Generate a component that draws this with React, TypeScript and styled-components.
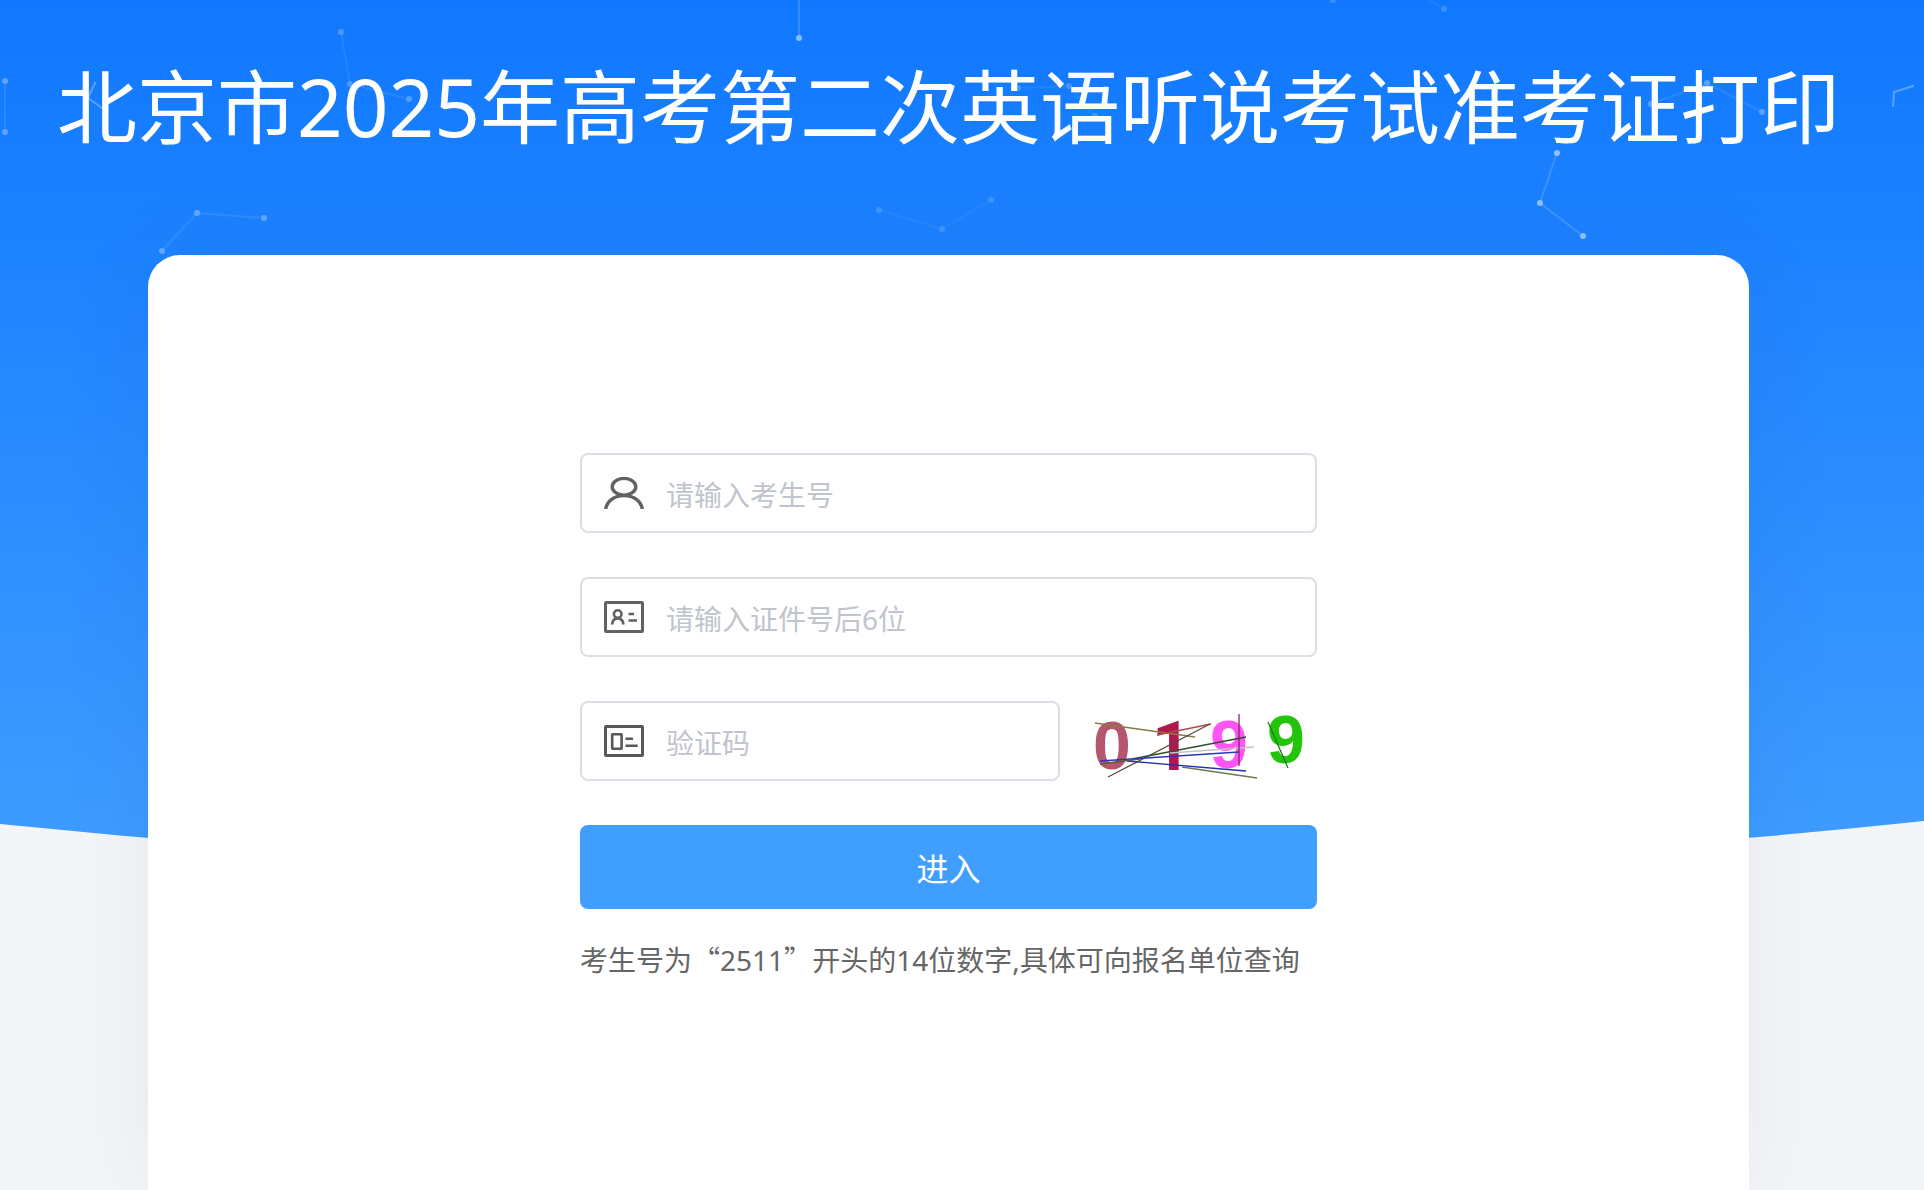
import React from "react";
import styled, { createGlobalStyle } from "styled-components";

const GlobalStyle = createGlobalStyle`
  *, *::before, *::after { box-sizing: border-box; }
  body {
    margin: 0;
    background: #f4f5f7;
    font-family: "Noto Sans", "Noto Sans CJK SC", sans-serif;
  }
`;

const Page = styled.div`
  position: relative;
  display: flex;
  flex-direction: column;
  align-items: center;
  min-height: 100vh;
  padding-right: 27px;
  overflow: hidden;
`;

const Backdrop = styled.svg`
  position: absolute;
  top: 0;
  left: 0;
  width: 100%;
  height: 880px;
`;

const Title = styled.h1`
  position: relative;
  margin: 0;
  padding: 48px 0 91px;
  color: #fff;
  font-size: 80px;
  font-weight: 400;
  line-height: 116px;
  text-align: center;
`;

const Card = styled.main`
  position: relative;
  flex: 1;
  display: flex;
  align-items: flex-start;
  justify-content: center;
  width: calc(100% - 296px);
  padding: 198px 32px;
  border-radius: 32px 32px 0 0;
  background: #fff;
  box-shadow: 0 0 100px rgba(20, 20, 80, 0.06);
`;

const Form = styled.form`
  display: flex;
  flex-direction: column;
  gap: 44px;
  width: 100%;
  max-width: 737px;
`;

const FieldRow = styled.div`
  display: flex;
  gap: 20px;
`;

const Field = styled.label`
  flex: 1;
  display: flex;
  align-items: center;
  gap: 22px;
  min-width: 0;
  height: 80px;
  padding: 0 22px;
  border: 2px solid #dcdfe6;
  border-radius: 8px;
  background: #fff;
`;

const FieldIcon = styled.svg<{ $color?: string }>`
  flex: none;
  width: 40px;
  height: 32px;
  color: ${(p) => p.$color ?? "#606266"};
  fill: none;
  stroke: currentColor;
  stroke-width: 3.4;
`;

const TextInput = styled.input`
  flex: 1;
  min-width: 0;
  height: 100%;
  padding: 4px 0 0;
  border: 0;
  outline: 0;
  background: transparent;
  color: #606266;
  font: inherit;
  font-size: 28px;
  line-height: 48px;
  &::placeholder {
    color: #c0c4cc;
    opacity: 1;
  }
`;

const CaptchaButton = styled.button`
  flex: none;
  display: block;
  width: 237px;
  height: 80px;
  padding: 0;
  border: 0;
  background: #fff;
  cursor: pointer;
`;

const CaptchaImage = styled.svg`
  display: block;
  width: 100%;
  height: 100%;
  overflow: visible;
  font-family: "Liberation Sans", Arial, sans-serif;
  font-size: 68px;
  font-weight: 700;
`;

const Footer = styled.div`
  display: flex;
  flex-direction: column;
  gap: 30px;
`;

const SubmitButton = styled.button`
  height: 84px;
  padding: 4px 0 0;
  border: 0;
  border-radius: 8px;
  background: #409eff;
  color: #fff;
  font: inherit;
  font-size: 32px;
  line-height: 40px;
  cursor: pointer;
`;

const Hint = styled.p`
  margin: 0;
  color: #666;
  font-size: 28px;
  line-height: 40px;
  white-space: nowrap;
`;

const WideQuote = styled.span`
  font-family: "Noto Sans CJK SC", sans-serif;
`;

type Chain = { points: [number, number][]; opacity: number; r?: number };

const chains: Chain[] = [
  { points: [[5, 81], [5, 132]], opacity: 0.3 },
  { points: [[95, 83], [88, 98], [102, 108]], opacity: 0.35, r: 1 },
  { points: [[341, 32], [350, 84], [409, 99]], opacity: 0.25 },
  { points: [[162, 251], [197, 213], [264, 218]], opacity: 0.3 },
  { points: [[799, -10], [799, 38]], opacity: 0.5 },
  { points: [[879, 210], [942, 229], [991, 200]], opacity: 0.16 },
  { points: [[1018, 88], [1069, 86], [1095, 116]], opacity: 0.2 },
  { points: [[1333, 0]], opacity: 0.18 },
  { points: [[1422, -5], [1444, 9]], opacity: 0.18 },
  { points: [[1557, 153], [1540, 203], [1583, 236]], opacity: 0.5 },
  { points: [[1651, 104], [1707, 83], [1762, 112]], opacity: 0.3 },
  { points: [[1893, 106], [1894, 92], [1913, 86]], opacity: 0.35, r: 1 },
];

const scribbles: [string, string][] = [
  ["#8a7a4a", "M15 22L115 36"],
  ["#b0484a", "M77 34L131 23"],
  ["#5a4a3c", "M28 76L130 23"],
  ["#2f4f2f", "M52 58L166 36"],
  ["#2a35b8", "M20 60L159 51"],
  ["#2230a8", "M47 60L166 70"],
  ["#6a7a50", "M102 66L177 77"],
  ["#c4c4c4", "M90 52L174 46"],
  ["#8a1f6a", "M159 13V65"],
  ["#1d7a1d", "M188 21L208 67"],
  ["#5c5a3a", "M20 63L60 58"],
];

export default function App() {
  return (
    <>
      <GlobalStyle />
      <Page>
        <Backdrop viewBox="0 0 1924 880" preserveAspectRatio="none" aria-hidden="true">
          <defs>
            <linearGradient id="sky" x1="0" y1="0" x2="0" y2="1">
              <stop offset="0" stopColor="#1078ff" />
              <stop offset="0.3" stopColor="#1e83ff" />
              <stop offset="1" stopColor="#409dff" />
            </linearGradient>
          </defs>
          <path d="M0 0H1924V821Q962 923 0 824Z" fill="url(#sky)" />
          {chains.map((c, i) => (
            <g key={i} opacity={c.opacity}>
              <polyline
                points={c.points.map((p) => p.join(",")).join(" ")}
                fill="none"
                stroke="#fff"
                strokeWidth="2"
                opacity={c.r ? 0.8 : 0.3}
              />
              {c.points.map(([x, y], j) => (
                <circle key={j} cx={x} cy={y} r={c.r ?? 3} fill="#fff" />
              ))}
            </g>
          ))}
        </Backdrop>

        <Title>北京市2025年高考第二次英语听说考试准考证打印</Title>

        <Card>
          <Form onSubmit={(e) => e.preventDefault()}>
            <FieldRow>
              <Field>
                <FieldIcon viewBox="0 0 40 32" aria-hidden="true">
                  <ellipse cx="20" cy="9.8" rx="11.8" ry="8.4" />
                  <path d="M1.7 32C3 24 10 18.6 20 18.6S37 24 38.3 32" />
                </FieldIcon>
                <TextInput type="text" aria-label="考生号" placeholder="请输入考生号" />
              </Field>
            </FieldRow>
            <FieldRow>
              <Field>
                <FieldIcon viewBox="0 0 40 32" aria-hidden="true">
                  <rect x="1.5" y="1.5" width="37" height="29" rx="0.5" strokeWidth="3" />
                  <g strokeWidth="2.6">
                    <circle cx="13.7" cy="13" r="3.8" />
                    <path d="M8 23.5C8.5 19.5 10.5 17.4 13.7 17.4S19 19.5 19.5 23.5M24.5 13H30M24.5 19.5H33" />
                  </g>
                </FieldIcon>
                <TextInput type="text" aria-label="证件号后6位" placeholder="请输入证件号后6位" />
              </Field>
            </FieldRow>
            <FieldRow>
              <Field>
                <FieldIcon $color="#585858" viewBox="0 0 40 32" aria-hidden="true">
                  <rect x="1.5" y="1.5" width="37" height="29" rx="0.5" strokeWidth="3" />
                  <g strokeWidth="2.6">
                    <rect x="8.2" y="9.2" width="9.4" height="14.6" rx="0.5" />
                    <path d="M21.5 13.8H29M21.5 20.8H33.7" />
                  </g>
                </FieldIcon>
                <TextInput type="text" aria-label="验证码" placeholder="验证码" />
              </Field>
              <CaptchaButton type="button" aria-label="刷新验证码">
                <CaptchaImage viewBox="0 0 237 80">
                  <text x="13" y="68" fill="#b5566f">0</text>
                  <text x="72" y="69" fill="#b01850" fontFamily="Roboto, sans-serif">1</text>
                  <text x="130" y="67" fill="#ff55f5">9</text>
                  <text x="187" y="62" fill="#22c40c">9</text>
                  {scribbles.map(([color, d]) => (
                    <path key={d} d={d} stroke={color} strokeWidth="1.3" fill="none" />
                  ))}
                </CaptchaImage>
              </CaptchaButton>
            </FieldRow>
            <Footer>
              <SubmitButton type="submit">进入</SubmitButton>
              <Hint>
                考生号为<WideQuote>“</WideQuote>2511<WideQuote>”</WideQuote>开头的14位数字,具体可向报名单位查询
              </Hint>
            </Footer>
          </Form>
        </Card>
      </Page>
    </>
  );
}
